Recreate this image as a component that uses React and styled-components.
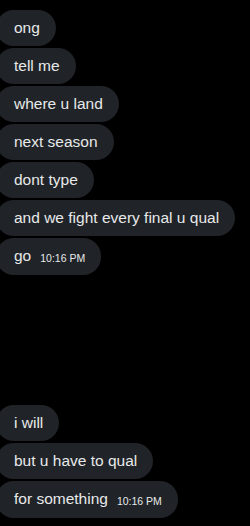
import React from "react"
import styled, { createGlobalStyle } from "styled-components"

const GlobalStyle = createGlobalStyle`
    body {
        margin: 0;
        background: #000;
        font-family: "Segoe UI", "Liberation Sans", Arial, sans-serif;
    }
`

const Thread = styled.div`
    width: 250px;
    height: 526px;
    background: #000;
    padding-top: 10px;
    box-sizing: border-box;
    overflow: hidden;
`

const Group = styled.div`
    display: flex;
    flex-direction: column;
    align-items: flex-start;
    gap: 2px;
    margin-top: ${(props) => props.offset || 0}px;
`

const Bubble = styled.div`
    display: flex;
    align-items: baseline;
    margin-left: -4px;
    padding: 8px 16px 8px 18px;
    background: #202327;
    border-radius: 18px;
    color: #e7e9ea;
    font-size: 15.5px;
    line-height: 20px;
    white-space: nowrap;
`

const Time = styled.span`
    margin-left: 9px;
    font-size: 10.5px;
    color: #e7e9ea;
    transform: translateY(1px);
`

const Message = ({ text, time }) => (
    <Bubble>
        {text}
        {time && <Time>{time}</Time>}
    </Bubble>
)

const first = ["ong", "tell me", "where u land", "next season", "dont type", "and we fight every final u qual"]
const second = ["i will", "but u have to qual"]

export default function App() {
    return (
        <>
            <GlobalStyle />
            <Thread>
                <Group>
                    {first.map((t) => <Message key={t} text={t} />)}
                    <Message text="go" time="10:16 PM" />
                </Group>
                <Group offset={130}>
                    {second.map((t) => <Message key={t} text={t} />)}
                    <Message text="for something" time="10:16 PM" />
                </Group>
            </Thread>
        </>
    )
}
